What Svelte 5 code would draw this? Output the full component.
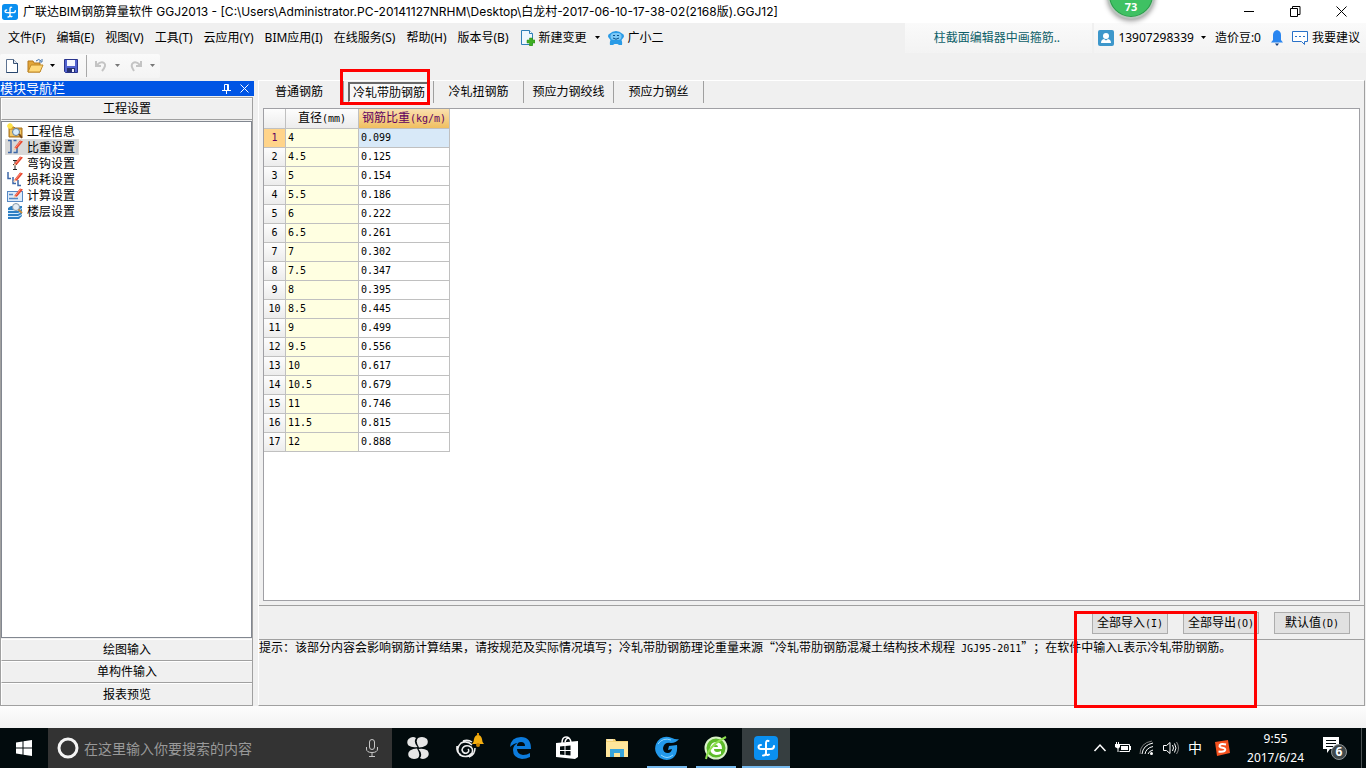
<script>
  const menus = ['文件(F)', '编辑(E)', '视图(V)', '工具(T)', '云应用(Y)', 'BIM应用(I)', '在线服务(S)', '帮助(H)', '版本号(B)'];
  const navItems = [
    { label: '工程信息', icon: 'info' },
    { label: '比重设置', icon: 'weight' },
    { label: '弯钩设置', icon: 'hook' },
    { label: '损耗设置', icon: 'loss' },
    { label: '计算设置', icon: 'calc' },
    { label: '楼层设置', icon: 'floor' }
  ];
  const sections = ['绘图输入', '单构件输入', '报表预览'];
  const tabs = ['普通钢筋', '冷轧带肋钢筋', '冷轧扭钢筋', '预应力钢绞线', '预应力钢丝'];
  const rows = [
    ['4', '0.099'], ['4.5', '0.125'], ['5', '0.154'], ['5.5', '0.186'], ['6', '0.222'], ['6.5', '0.261'],
    ['7', '0.302'], ['7.5', '0.347'], ['8', '0.395'], ['8.5', '0.445'], ['9', '0.499'], ['9.5', '0.556'],
    ['10', '0.617'], ['10.5', '0.679'], ['11', '0.746'], ['11.5', '0.815'], ['12', '0.888']
  ];
  const actions = [['全部导入', '(I)'], ['全部导出', '(O)'], ['默认值', '(D)']];

  let selectedNav = $state(1);
  let selectedTab = $state(1);
  let selectedRow = $state(0);
</script>

{#snippet caret()}
  <svg width="7" height="4" viewBox="0 0 7 4"><path d="M1 0h5L3.500 3z" fill="currentColor" /></svg>
{/snippet}

{#snippet appLogo(size)}
  <svg width={size} height={size} viewBox="0 0 24 24">
    <rect width="24" height="24" rx="4" fill="#0a8ff0" />
    <path d="M14.500 5Q12 4 12 7.500V17q0 2.500-3 2.500M9.500 13H7q-2.500 0-2.500-2T7 9M12 13h5q3 0 3-3" fill="none" stroke="#fff" stroke-width="2" stroke-linecap="round" />
    <path d="M9 13h4" stroke="#fff" stroke-width="2" />
    <path d="M15 18.500q-2 1.500-3-1" fill="none" stroke="#fff" stroke-width="2" stroke-linecap="round" />
  </svg>
{/snippet}

{#snippet pencil()}
  <path d="M7.500 8.500 13 1.500l3 1L10 9.500l-3 1z" fill="#e8452c" />
  <path d="M8.500 8.500 13.500 2.500" stroke="#ff9a86" />
  <path d="m6 11 1.500-2.500 2 1.500z" fill="#f4d4b0" />
{/snippet}

{#snippet navIcon(name)}
  <svg width="16" height="16" viewBox="0 0 16 16">
    {#if name === 'info'}
      <path d="M2 4h5l1 1h7v9H2z" fill="#d9a036" stroke="#a87420" />
      <path d="M3 7h11v6H3z" fill="#f2c868" />
      <circle cx="9" cy="9" r="3.500" fill="#d8ecfb" stroke="#5f7f9e" />
      <path d="m12 11 3 4" stroke="#7a4b1c" stroke-width="2" />
      <path d="M3 0v6M0 3h6M1 1l4 4M5 1 1 5" stroke="#ffe34a" stroke-width="1.500" />
    {:else if name === 'weight'}
      <path d="M1 1.500h3v12H1M6.500 1.500h3M6.500 13.500h3.500V6" fill="none" stroke="#3f68a8" stroke-width="1.500" />
      {@render pencil()}
    {:else if name === 'hook'}
      <path d="M6 5.500h4M8 5v9M6 14.500h4M6 9.500h4" stroke="#222" />
      {@render pencil()}
    {:else if name === 'loss'}
      <path d="M1 1v6.500h3M6 6v6.500h3M11 9v5.500h3" fill="none" stroke="#3f68a8" stroke-width="1.500" />
      {@render pencil()}
    {:else if name === 'calc'}
      <rect x="0.500" y="4.500" width="15" height="10" fill="#dcebfa" stroke="#5588c4" />
      <path d="M2 7.500h4M2 11.500h9" stroke="#5588c4" stroke-width="1.500" />
      {@render pencil()}
    {:else}
      <path d="M1 5 4 3h11v10l-3 3H1z" fill="#2c7fc4" />
      <path d="M1 7.500h10l4-2M1 10.500h10l4-2M1 13.500h10l4-2" fill="none" stroke="#d5edff" />
      <circle cx="9" cy="4" r="3.500" fill="#e4edf4" stroke="#8496a6" />
      <path d="m11.500 6.500 3.500 3.500" stroke="#c08a3e" stroke-width="2" />
    {/if}
  </svg>
{/snippet}

<div class="page">
  <header class="title">
    {@render appLogo(16)}
    <span class="name">广联达BIM钢筋算量软件 GGJ2013 - [C:\Users\Administrator.PC-20141127NRHM\Desktop\白龙村-2017-06-10-17-38-02(2168版).GGJ12]</span>
    <button class="win" aria-label="最小化"><svg width="10" height="11"><path d="M0 5.500h10" stroke="#000" /></svg></button>
    <button class="win" aria-label="还原"><svg width="11" height="11"><path d="M.5 2.500h7v8h-7zM2.500 2.500v-2h7.500v8H8" fill="none" stroke="#000" /></svg></button>
    <button class="win" aria-label="关闭"><svg width="11" height="11"><path d="m.5.5 10 10M10.500.5l-10 10" stroke="#000" /></svg></button>
    <div class="ball">73</div>
  </header>

  <nav class="menubar">
    {#each menus as m}<button class="plain">{m}</button>{/each}
    <button class="plain withicon">
      <svg width="15" height="16" viewBox="0 0 15 16">
        <path d="M1.500.5h8l3 3v11h-11z" fill="#eef7fe" stroke="#2f7fb8" /><path d="M9.500.5v3h3" fill="#fff" stroke="#2f7fb8" />
        <path d="M9.500 8h3v2H15v3h-2.500v3h-3v-3H7v-3h2.500z" fill="#3fae22" stroke="#2c8a14" stroke-width=".5" />
      </svg>
      新建变更
      <span class="drop">{@render caret()}</span>
    </button>
    <button class="plain withicon robot">
      <svg width="16" height="16" viewBox="0 0 16 16">
        <path d="M2 3.500Q4 1 8 1t6 2.500q3 1.500 1.500 4L13.500 10q1 2 .5 5h-3l-1.500-1h-3L5 15H2q-.5-3 .5-5L.5 7.500Q-1 5 2 3.500z" fill="#2a9be6" />
        <rect x="2.500" y="3" width="11" height="7" rx="3.500" fill="#7cc8f6" />
        <path d="M5 5.500h2M9 5.500h2M5 8q3 2.500 6 0" fill="none" stroke="#08518a" />
      </svg>
      广小二
    </button>
    <div class="banner"><a href="#tip">柱截面编辑器中画箍筋..</a></div>
    <div class="account">
      <svg width="16" height="16" viewBox="0 0 16 16"><rect width="16" height="16" rx="2" fill="#3d97cb" /><circle cx="8" cy="6" r="3" fill="#fff" /><path d="M3 13q0-3.500 3-4l2 1.500L10 9q3 .5 3 4z" fill="#fff" /></svg>
      <button class="plain phone">13907298339 <span>{@render caret()}</span></button>
      <span class="beans">造价豆:0</span>
      <svg width="14" height="16" viewBox="0 0 14 16"><path d="M7 0Q3 1 3 5v5l-2 2.500h12L11 10V5q0-4-4-5z" fill="#2a86f0" /><path d="M5 13.500h4L7 16z" fill="#123f80" /></svg>
      <svg class="bubble" width="16" height="16" viewBox="0 0 16 16"><path d="M.5 1.500h15v10h-3v3l-3-3h-9z" fill="#fff" stroke="#2a72c8" /><path d="M3 6.500h2M7 6.500h2M11 6.500h2" stroke="#2a72c8" /></svg>
      <button class="plain">我要建议</button>
    </div>
  </nav>

  <div class="toolbar">
    <div class="tools">
      <button class="plain" aria-label="新建"><svg width="16" height="16" viewBox="0 0 16 16"><path d="M2.500 1.500h7l4 4v9h-11z" fill="#fff" stroke="#5e7391" /><path d="M9.500 1.500v4h4" fill="#dce6f2" stroke="#3d5475" /><path d="M13.500 5v9.500h-11" fill="none" stroke="#28466e" /></svg></button>
      <button class="plain open" aria-label="打开"><svg width="17" height="16" viewBox="0 0 17 16"><path d="M1 3h5l1 2h6v9H1z" fill="#e2a63a" stroke="#b5791c" /><path d="M1 14 4 7h12l-3 7z" fill="#ffd97a" stroke="#c28a26" /><path d="M9 3q3-3 5 0M15 1v3h-3" fill="none" stroke="#3c6ea8" /></svg> {@render caret()}</button>
      <button class="plain save" aria-label="保存"><svg width="16" height="16" viewBox="0 0 16 16"><path d="M1.500 1.500h13v13h-12l-1-1z" fill="#5263cf" stroke="#2a348c" /><path d="M4 2h8v6H4z" fill="#f4f7ff" /><path d="M4 10h8v4H4z" fill="#25306f" /><path d="M9 11h2v3H9z" fill="#eef" /></svg></button>
      <i></i>
      <button class="plain dim" aria-label="撤销"><svg width="16" height="16" viewBox="0 0 16 16"><path d="M3 3v5h5M4 7q4-4 7-2t-2 8" fill="none" stroke="#c4c4c4" stroke-width="2" /></svg> {@render caret()}</button>
      <button class="plain dim" aria-label="重做"><svg width="16" height="16" viewBox="0 0 16 16"><path d="M13 3v5H8M12 7Q8 3 5 5t1 8" fill="none" stroke="#c4c4c4" stroke-width="2" /></svg> {@render caret()}</button>
    </div>
  </div>

  <main>
    <aside>
      <div class="dock">
        <span>模块导航栏</span>
        <button aria-label="固定"><svg width="9" height="10" viewBox="0 0 9 10"><path d="M2.500 6V.5h4V6M5.500 1v5M0 6.500h9M4.500 7v3" fill="none" stroke="#fff" /></svg></button>
        <button aria-label="关闭面板"><svg width="9" height="9" viewBox="0 0 9 9"><path d="m.5.5 8 8M8.500.5l-8 8" stroke="#fff" /></svg></button>
      </div>
      <div class="panel">
        <button class="section">工程设置</button>
        <ul>
          {#each navItems as item, i}
            <li><button class:on={selectedNav === i} onclick={() => (selectedNav = i)}>{@render navIcon(item.icon)}<span>{item.label}</span></button></li>
          {/each}
        </ul>
        {#each sections as s}<button class="section">{s}</button>{/each}
      </div>
    </aside>

    <section class="work">
      <div class="tabs" role="tablist">
        {#each tabs as t, i}
          <div class="tabcell">
            <button role="tab" aria-selected={selectedTab === i} class:on={selectedTab === i} onclick={() => (selectedTab = i)}>{t}</button>
            {#if i === 1}<div class="mark marktab"></div>{/if}
          </div>
        {/each}
      </div>
      <div class="sheet">
        <table>
          <colgroup><col class="c0" /><col class="c1" /><col class="c2" /></colgroup>
          <thead>
            <tr><th></th><th>直径<span class="mono">(mm)</span></th><th class="hot">钢筋比重<span class="mono">(kg/m)</span></th></tr>
          </thead>
          <tbody>
            {#each rows as r, i}
              <tr class:on={selectedRow === i} onclick={() => (selectedRow = i)}>
                <th scope="row" class="mono">{i + 1}</th><td class="mono dia">{r[0]}</td><td class="mono val">{r[1]}</td>
              </tr>
            {/each}
          </tbody>
        </table>
      </div>
      <div class="actions">
        {#each actions as a}<button>{a[0]}<span class="mono">{a[1]}</span></button>{/each}
        <div class="mark markact"></div>
      </div>
      <p class="hint">提示：该部分内容会影响钢筋计算结果，请按规范及实际情况填写；冷轧带肋钢筋理论重量来源“冷轧带肋钢筋混凝土结构技术规程<span class="mono">&nbsp;JGJ95-2011</span>”；在软件中输入<span class="mono">L</span>表示冷轧带肋钢筋。</p>
    </section>
  </main>

  <div class="strip"></div>

  <footer>
    <button class="start" aria-label="开始"><svg width="16" height="16" viewBox="0 0 16 16"><path d="M0 2.500 6.500 1.500v6H0zM7.500 1.300 16 0v7.500H7.500zM0 8.500h6.500v6L0 13.600zM7.500 8.500H16V16l-8.500-1.300z" fill="#fff" /></svg></button>
    <label class="search">
      <svg width="22" height="22" viewBox="0 0 22 22"><circle cx="11" cy="11" r="9" fill="none" stroke="#f4f4f4" stroke-width="3" /></svg>
      <input aria-label="搜索" placeholder="在这里输入你要搜索的内容" />
      <svg width="12" height="18" viewBox="0 0 12 18"><rect x="3.500" y=".5" width="5" height="10" rx="2.500" fill="none" stroke="#c8c8c8" /><path d="M.5 8v2q0 3.500 5.500 3.500T11.500 10V8M6 14v3M3 17.500h6" fill="none" stroke="#c8c8c8" /></svg>
    </label>
    <div class="apps">
      <button aria-label="浏览器">
        <svg width="24" height="24" viewBox="0 0 24 24">
          <g fill="#e6e6e6"><path d="M11.500 11Q6 12 2.500 9.500 0 6 2.500 3q4-3.500 7.500-1-3 4 1.500 9z" /><path d="M13 11.500Q9 5 12 2q5-2.500 9 1 2 4-1 6.500-3 2-7 2z" /><path d="M12.500 13q5.500-1 9 1.500 2.500 3.500 0 6.500-4 3.500-7.500 1 3-4-1.500-9z" /><path d="M11 12.500q4 6.500 1 9.500-5 2.500-9-1-2-4 1-6.500 3-2 7-2z" /></g>
        </svg>
      </button>
      <button aria-label="提醒">
        <svg width="32" height="30" viewBox="0 0 32 30">
          <path d="M20 12Q15 7 9 10q-6 6-1 12 7 4 12-2 2-5-3-7-6-1-7 4 1 4 5 3 3-2 1-4M5 13q-1 6 4 9M11 8q5-2 9 1M23 15q0 7-6 9" fill="none" stroke="#eee" stroke-width="1.500" />
          <path d="M20 11q2-2 2-5 1-4 4-4t4 4q0 3 2 5z" fill="#f4ae10" /><circle cx="26" cy="12" r="2" fill="#c98200" /><path d="M25 0h2v2h-2z" fill="#d99000" />
        </svg>
      </button>
      <button class="edge" aria-label="Edge"><svg width="22" height="22" viewBox="0 0 22 22"><path d="M0 10Q1 0 11 0q10 0 10 12H7q0 5 6 6 4 0 7-2v4q-4 2-8 2-9-1-9-9 0-5 5-7-4 0-8 4zm7-1h8q0-4-4-4t-4 4z" fill="#0c7bdc" /></svg></button>
      <button aria-label="应用商店"><svg width="22" height="24" viewBox="0 0 22 24"><path d="M0 7 22 5v16l-3 2L0 21z" fill="#fff" /><path d="M6 7q0-6 4-6t5 5M9 6q1-4 4-4" fill="none" stroke="#fff" stroke-width="1.500" /><path d="M4 10.500 8.500 10v4H4zM9.500 10l5-.5V14h-5zM4 15h4.500v4L4 18.500zM9.500 15h5v4.500l-5-.5z" fill="#020b0d" /></svg></button>
      <button aria-label="资源管理器"><svg width="22" height="18" viewBox="0 0 22 18"><path d="M0 0h9l1 2h12v16H0z" fill="#f5d375" /><path d="M0 3h22v15H0z" fill="#ffe69b" /><path d="M1 1h6" stroke="#fff" /><path d="M4 18v-8h14v8h-4v-4H8v4z" fill="#38a5dc" /></svg></button>
      <button aria-label="广联达" class="run"><svg width="24" height="24" viewBox="0 0 24 24"><path d="M24 3q-3 4-8 4-7-1-8 5 0 5 5 5 3 0 4-4l-4 1 1-4 8-1q1 9-4 13-6 4-13 0-7-6-4-14Q6-2 17 2q4 2 7 1z" fill="#2399ea" /><path d="M3 8Q8 1 16 4M6 19q6 5 12 0" fill="none" stroke="#8fd6ff" /></svg></button>
      <button aria-label="IE浏览器" class="run multi"><svg width="24" height="24" viewBox="0 0 24 24"><circle cx="12" cy="12" r="10.500" fill="#5dbb2a" stroke="#d9f2c8" stroke-width="2" /><path d="M6 12q1-6 6-6 6 0 6 7H10q0 3 3 3 2 0 4-1v3q-3 1-5 1-6-1-6-7zm4-1h4q0-2-2-2t-2 2z" fill="#fff" /><path d="M2 23Q4 10 22 1" fill="none" stroke="#8ee050" stroke-width="2" /></svg></button>
      <button aria-label="算量软件" class="run active">{@render appLogo(24)}</button>
    </div>
    <div class="tray">
      <svg width="14" height="16" viewBox="0 0 14 16"><path d="m1.500 11 5.500-6 5.500 6" fill="none" stroke="#fff" stroke-width="1.500" /></svg>
      <svg width="16" height="16" viewBox="0 0 16 16"><path d="M4.500 4.500h10v7h-10M15.500 6v4" fill="none" stroke="#fff" /><path d="M6 6h7v4H6zM0 4h5v3L3.500 8.500V12h-1V8.500L0 7zM1 2h1v2H1zM3 2h1v2H3z" fill="#fff" /></svg>
      <svg width="16" height="16" viewBox="0 0 16 16"><path d="M3 14Q4 5 14 3M6 14q1-6 8-7.500M9 14q1-3 5-4" fill="none" stroke="#fff" /><path d="M1 14Q1 3 13 1" fill="none" stroke="#777" /><circle cx="12.500" cy="13.500" r="1.500" fill="#fff" /></svg>
      <svg width="17" height="16" viewBox="0 0 17 16"><path d="M.5 5.500h3l3.500-3v11l-3.500-3h-3zM9.500 5q2 3 0 6M11.500 3.500q3 4.500 0 9" fill="none" stroke="#fff" /><path d="M13.500 2q4 6 0 12" fill="none" stroke="#888" /></svg>
      <span class="ime">中</span>
      <svg width="16" height="16" viewBox="0 0 16 16"><path d="M1 2 14 0l2 13-13 3z" fill="#f4511e" /><path d="M12 4.500Q5 3 5.500 6.500q.5 1 4 1.500 3 1 1 3-2 1-6 .5" fill="none" stroke="#fff" stroke-width="2" /></svg>
      <div class="clock"><span>9:55</span><span>2017/6/24</span></div>
      <svg class="note" width="26" height="26" viewBox="0 0 26 26"><path d="M1 2h16v12H8l-3 4v-4H1z" fill="#fff" /><path d="M4 5.500h10M4 8.500h10M4 11.500h7" stroke="#020b0d" /><circle cx="17" cy="17" r="7.500" fill="#40484a" stroke="#8e9496" /><text x="17" y="21" text-anchor="middle" fill="#fff" font-size="12" font-weight="bold">6</text></svg>
      <i></i>
    </div>
  </footer>
</div>

<style>
  :global(body) { margin: 0; background: #f0f0f0; }
  .page { min-height: 100vh; display: flex; flex-direction: column; font: 12px/16px "Noto Sans", "Noto Sans CJK SC", sans-serif; color: #000; overflow: hidden; }
  button { font: inherit; color: inherit; margin: 0; padding: 0; border: 0; background: none; white-space: nowrap; }
  svg { flex: none; display: block; }
  .plain { display: flex; align-items: center; }
  .mono { font-family: "DejaVu Sans Mono", monospace; font-size: 10px; }

  .title { position: relative; height: 23px; flex: none; display: flex; align-items: center; background: #fff; padding: 0 2px; }
  .name { margin-left: 5px; flex: 1; white-space: nowrap; font-family: Inter, "Noto Sans CJK SC", sans-serif; }
  .win { width: 46px; height: 22px; display: flex; align-items: center; justify-content: center; }
  .ball { position: absolute; right: 211px; top: -29px; width: 44px; height: 41px; padding-bottom: 3px; border: 2px solid #b8c4bc; border-radius: 50%; background: #3fc163; box-shadow: 0 2px 5px #0006, inset 0 0 0 1px #2d9a4c; color: #fff; font-weight: bold; font-size: 11px; display: flex; align-items: flex-end; justify-content: center; line-height: 14px; }

  .menubar { height: 30px; flex: none; display: flex; align-items: center; gap: 11px; padding-left: 8px; }
  .withicon { gap: 4px; }
  .drop { margin-left: 3px; }
  .robot { margin-left: -4px; }
  .banner { margin-left: auto; width: 187px; height: 30px; box-sizing: border-box; padding-right: 4px; display: flex; align-items: center; justify-content: center; background: linear-gradient(#fafafa, #f3f3f3); }
  .banner a { color: #0e5f68; text-decoration: none; }
  .account { margin-left: -9px; height: 30px; display: flex; align-items: center; background: linear-gradient(#fafafa, #f3f3f3); padding: 0 6px 0 4px; }
  .phone { margin: 0 8px 0 4px; gap: 6px; }
  .beans { margin-right: 9px; }
  .bubble { margin: 0 4px 0 8px; }

  .toolbar { height: 27px; flex: none; }
  .tools { width: max-content; height: 24px; margin-top: 1px; display: flex; align-items: center; padding: 0 4px; background: linear-gradient(#fafafa, #f4f4f4); border-radius: 2px; }
  .tools .plain { gap: 5px; }
  .tools .open { margin: 0 7px; }
  .tools i { width: 1px; height: 22px; margin: 0 6px 0 7px; background: #a8a8a8; }
  .dim { color: #777; }
  .dim + .dim { margin-left: 7px; }

  main { flex: 1; display: flex; gap: 4px; padding-right: 1px; }
  aside { width: 254px; flex: none; display: flex; flex-direction: column; }
  .dock { height: 15px; margin-top: 1px; background: #0055e5; color: #fff; display: flex; align-items: center; gap: 9px; padding-right: 5px; font-size: 13px; line-height: 15px; }
  .dock span { margin-right: auto; }
  .panel { flex: 1; width: 253px; box-sizing: border-box; border: 1px solid #a0a0a0; display: flex; flex-direction: column; margin-top: 1px; }
  .section { height: 22px; flex: none; box-sizing: border-box; border-bottom: 1px solid #a0a0a0; border-top: 1px solid #fff; border-left: 1px solid #fff; line-height: 20px; }
  .section:last-child { border-bottom: 0; }
  ul { flex: 1; list-style: none; margin: 1px 0; padding: 1px 0 0 3px; background: #fff; border: 1px solid #828790; }
  li { height: 16px; }
  li button { display: flex; gap: 4px; height: 16px; padding: 0 4px 0 2px; line-height: 17px; }
  li .on { background: #d9d9d9; }

  .work { flex: 1; min-width: 0; display: flex; flex-direction: column; border: 1px solid #a0a0a0; border-top-color: #fff; border-left-color: #fff; }
  .tabs { display: flex; flex: none; height: 27px; }
  .tabcell { position: relative; width: 90px; height: 22px; box-sizing: border-box; border-right: 1px solid #a0a0a0; display: flex; padding: 1px 4px 0; }
  .tabcell:first-child { width: 85px; padding-left: 0; }
  .tabcell button { flex: 1; height: 20px; line-height: 18px; border: 1px solid transparent; }
  .tabcell .on { background: #f8f8f8; border: 1px solid #fff; border-top: 2px solid #696969; border-left: 2px solid #696969; }
  .mark { position: absolute; box-sizing: border-box; border: 3px solid #f00; pointer-events: none; }
  .marktab { left: -4px; top: -12px; width: 90px; height: 36px; }
  .sheet { flex: 1; margin: 0 4px; background: #fff; border: 1px solid #a0a0a5; }
  table { table-layout: fixed; width: 186px; border-collapse: separate; border-spacing: 0; }
  .c0 { width: 22px; }
  .c1 { width: 73px; }
  .c2 { width: 91px; }
  th, td { box-sizing: border-box; height: 19px; padding: 0; border: 0 solid #c0c0c0; border-width: 0 1px 1px 0; font-weight: normal; text-align: left; line-height: 18px; white-space: nowrap; }
  thead th { height: 20px; }
  th { background: linear-gradient(#fdfdfd, #ececec); text-align: center; }
  th.hot { background: linear-gradient(#fae0ae, #f0bf60); color: #600060; }
  td { padding-left: 2px; }
  .dia { background: #ffffe1; }
  .on th { background: #ffd48a; color: #600060; }
  .on .val { background: #d8e9f8; }

  .actions { position: relative; height: 34px; margin-top: 4px; flex: none; box-sizing: border-box; border-top: 1px solid #a0a0a0; display: flex; justify-content: flex-end; gap: 15px; padding: 6px 14px 0 0; }
  .actions button { width: 76px; height: 22px; box-sizing: border-box; border: 1px solid #adadad; background: #e1e1e1; line-height: 18px; }
  .markact { right: 107px; top: 5px; width: 183px; height: 97px; z-index: 1; }
  .hint { height: 65px; flex: none; margin: 0; border-top: 1px solid #a0a0a0; font-family: "Noto Sans CJK SC", sans-serif; line-height: 14px; text-spacing-trim: space-all; }

  .strip { height: 22px; flex: none; background: linear-gradient(#fdfdfd, #f2f2f2); }

  footer { height: 40px; flex: none; display: flex; background: #020b0d; color: #fff; }
  .start { width: 48px; display: flex; align-items: center; justify-content: center; }
  .search { width: 344px; box-sizing: border-box; background: #333; display: flex; align-items: center; gap: 5px; padding: 0 14px 0 9px; }
  .search input { flex: 1; min-width: 0; border: 0; padding: 0; outline: 0; background: none; color: #fff; font: 14px/20px "Noto Sans CJK SC", sans-serif; }
  .search input::placeholder { color: #999; opacity: 1; }
  .apps { width: 396px; margin-left: 2px; display: flex; justify-content: space-between; }
  .apps button { width: 48px; height: 40px; display: flex; align-items: center; justify-content: center; background: linear-gradient(#76b9ed, #76b9ed) center bottom / 0 2px no-repeat; }
  .apps .edge { box-sizing: border-box; padding-left: 8px; }
  .apps .run { background-size: 40px 2px; }
  .apps .active { background-color: #363e40; background-size: 48px 2px; }
  .tray { margin-left: auto; display: flex; align-items: center; gap: 8px; }
  .ime { font-size: 14px; }
  .ime + svg { margin-left: 4px; }
  .tray .clock { display: flex; flex-direction: column; align-items: center; line-height: 19px; margin: 0 10px 0 9px; }
  .note { margin-right: 5px; }
  .tray i { width: 1px; height: 40px; background: #4a5153; margin-right: 4px; }
</style>
